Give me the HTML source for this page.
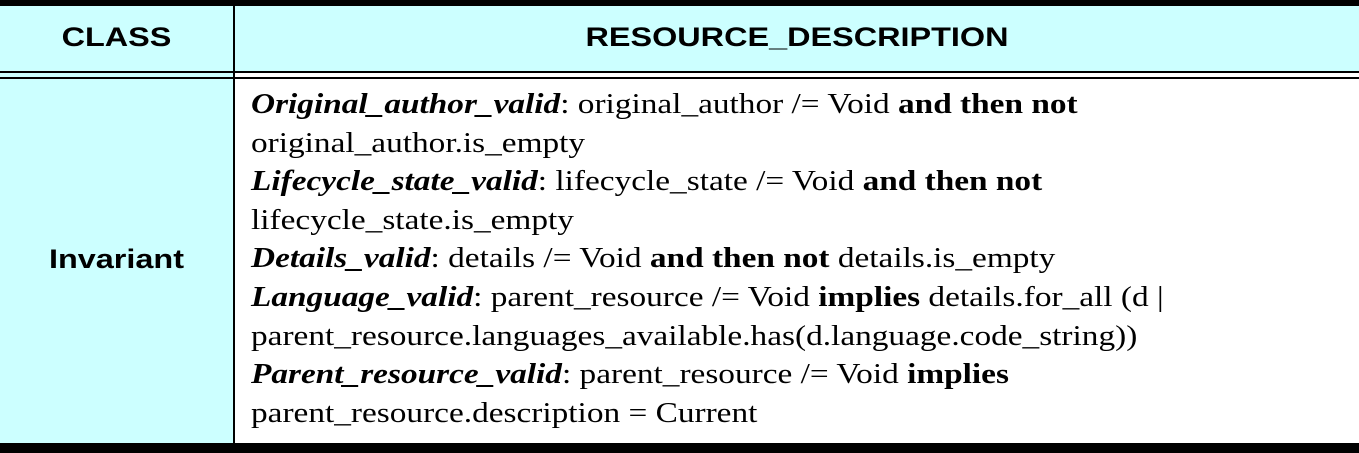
<!DOCTYPE html>
<html><head><style>
body{margin:0;width:1359px;height:453px;overflow:hidden;background:#fff;position:relative;font-family:"Liberation Serif",serif}
div{position:absolute}
.h{font:bold 27px "Liberation Sans",sans-serif;color:#000;top:22px;text-align:center;transform:scaleX(1.2)}
.t{left:251px;top:86px;font-size:28px;line-height:38.6px;white-space:nowrap;color:#000;transform:scaleX(1.19);transform-origin:0 0}
</style></head><body>
<div style="left:0;top:0;width:1359px;height:6px;background:#000"></div>
<div style="left:0;top:6px;width:1359px;height:65px;background:#ccffff"></div>
<div style="left:0;top:71px;width:1359px;height:2px;background:#000"></div>
<div style="left:0;top:77px;width:1359px;height:2px;background:#000"></div>
<div style="left:0;top:79px;width:233px;height:364px;background:#ccffff"></div>
<div style="left:0;top:73px;width:233px;height:4px;background:#ccffff"></div>
<div style="left:233px;top:6px;width:2px;height:437px;background:#000"></div>
<div style="left:0;top:443px;width:1359px;height:10px;background:#000"></div>
<div class="h" style="left:0;width:233px">CLASS</div>
<div class="h" style="left:235px;width:1124px">RESOURCE_DESCRIPTION</div>
<div class="h" style="left:0;width:233px;top:244px">Invariant</div>
<div class="t">
<b><i>Original_author_valid</i></b>: original_author /= Void <b>and then not</b><br>
original_author.is_empty<br>
<b><i>Lifecycle_state_valid</i></b>: lifecycle_state /= Void <b>and then not</b><br>
lifecycle_state.is_empty<br>
<b><i>Details_valid</i></b>: details /= Void <b>and then not</b> details.is_empty<br>
<b><i>Language_valid</i></b>: parent_resource /= Void <b>implies</b> details.for_all (d |<br>
parent_resource.languages_available.has(d.language.code_string))<br>
<b><i>Parent_resource_valid</i></b>: parent_resource /= Void <b>implies</b><br>
parent_resource.description = Current
</div>
</body></html>
